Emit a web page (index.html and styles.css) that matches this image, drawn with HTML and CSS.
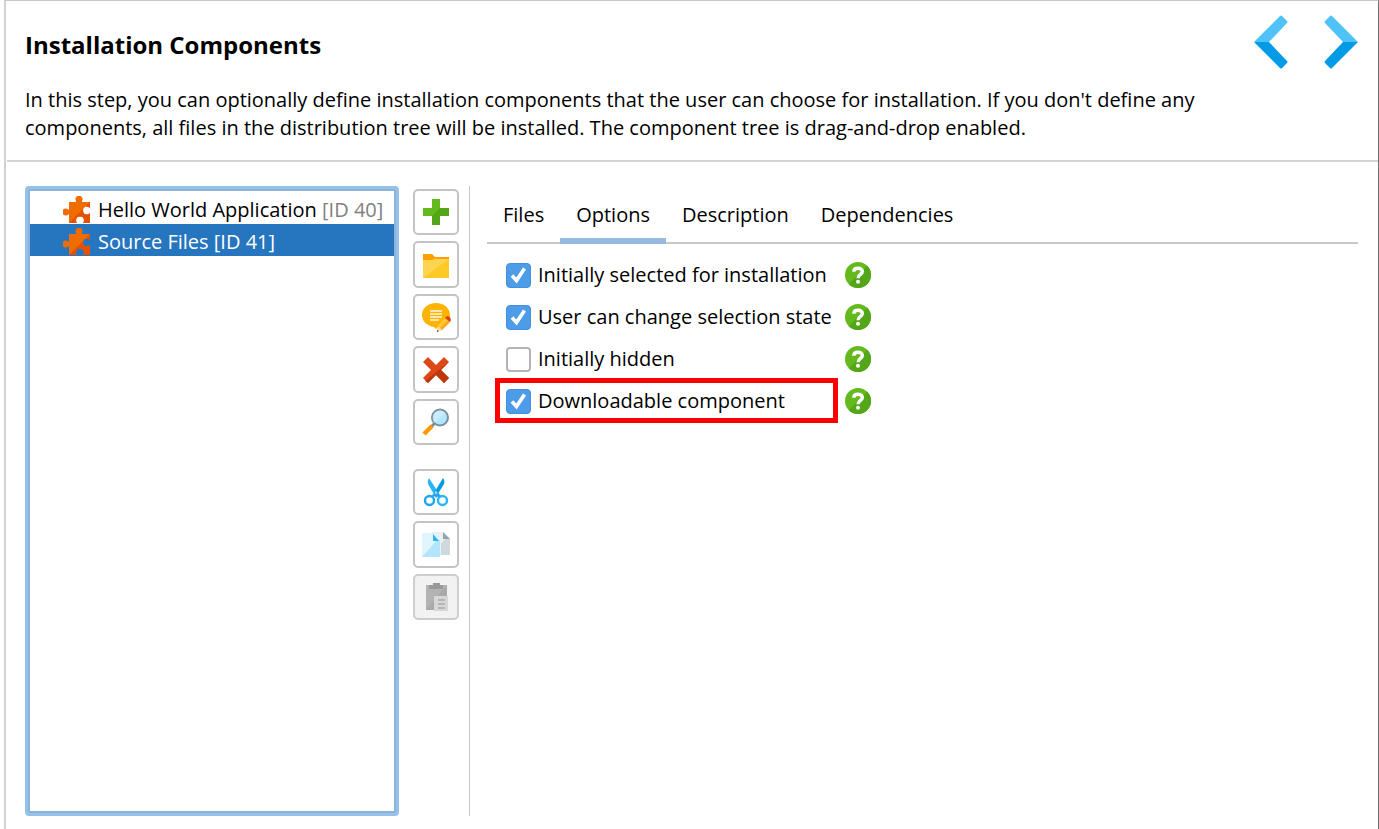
FILE: index.html
```html
<!DOCTYPE html>
<html lang="en">
<head>
<meta charset="utf-8">
<title>Installation Components</title>
<link rel="stylesheet" href="styles.css">
</head>
<body>
<svg class="defs" aria-hidden="true">
  <symbol id="puzzle" viewBox="0 0 27 28">
    <path fill="#ef6c00" d="M6 6h7V5a3.500 3.500 0 1 1 6 0v1h8v6c-1-1-2-1.500-3-1.500a4 4 0 0 0 0 8c1 0 2-.5 3-1.500v10h-7c1-1 1-2 1-2.500a4 4 0 0 0-8 0c0 .5 0 1.500 1 2.500H6v-9c-1 1-2 1.500-3 1.500a3.500 3.500 0 0 1 0-7c1 0 2 .5 3 1.500z"/>
    <path fill="#e65100" d="M27 6v6c-1-1-2-1.500-3-1.500a4 4 0 0 0 0 8c1 0 2-.5 3-1.500v10h-7c1-1 1-2 1-2.500a4 4 0 0 0-8 0c0 .5 0 1.500 1 2.500H6z"/>
  </symbol>
  <symbol id="help" viewBox="0 0 26 26">
    <circle cx="13" cy="13" r="13" fill="#64b91c"/>
    <path fill="#53a618" d="M22.200 3.800A13 13 0 0 1 3.800 22.200z"/>
    <path fill="none" stroke="#fff" stroke-width="3.400" d="M8.800 9.800C8.800 7.500 10.600 6.200 13 6.200s4.400 1.300 4.400 3.400c0 2.800-4.400 2.800-4.400 6.600"/>
    <circle cx="13" cy="19.800" r="2" fill="#fff"/>
  </symbol>
</svg>
<div class="window">
  <header class="header">
    <div class="intro">
      <h1 class="title">Installation Components</h1>
      <p class="text">In this step, you can optionally define installation components that the user can choose for installation. If you don't define any components, all files in the distribution tree will be installed. The component tree is drag-and-drop enabled.</p>
    </div>
    <nav class="steps" aria-label="Steps">
      <button class="step" aria-label="Previous"><svg width="34" height="54" viewBox="0 0 34 54"><path fill="#4fc3f7" d="M0 27 26 1q1-1 2 0l5 5q1 1 0 2L15 27z"/><path fill="#039be5" d="M0 27 26 53q1 1 2 0l5-5q1-1 0-2L15 27z"/></svg></button>
      <button class="step" aria-label="Next"><svg width="34" height="54" viewBox="0 0 34 54"><path fill="#4fc3f7" d="M34 27 8 1Q7 0 6 1L1 6q-1 1 0 2l18 19z"/><path fill="#039be5" d="M34 27 8 53q-1 1-2 0l-5-5q-1-1 0-2l18-19z"/></svg></button>
    </nav>
  </header>
  <main class="main">
    <ul class="tree" role="listbox" aria-label="Components">
      <li class="node" role="option"><svg class="puzzle"><use href="#puzzle"/></svg><span>Hello World Application <span class="id">[ID 40]</span></span></li>
      <li class="node selected" role="option" aria-selected="true"><svg class="puzzle"><use href="#puzzle"/></svg><span>Source Files <span class="id">[ID 41]</span></span></li>
    </ul>
    <div class="toolbar">
      <div class="group">
        <button class="tool" aria-label="Add"><svg viewBox="0 0 30 30"><path fill="#64b91c" d="M11 2h8v9h9v8h-9v9h-8v-9H2v-8h9z"/><path fill="#53a618" d="M28 11v8h-9v9h-8v-9l8-8z"/></svg></button>
        <button class="tool" aria-label="New folder"><svg viewBox="0 0 30 30"><path fill="#ffa000" d="M2 4h9l3 3h14v4H2z"/><path fill="#ffca28" d="M28 9v19H2V10h9l3-1z"/><path fill="#ffd54f" d="M2 10h9l3-1h14L2 28z"/></svg></button>
        <button class="tool" aria-label="Edit comment"><svg viewBox="0 0 30 30"><path fill="#ffb300" d="M15 1c8 0 14 5 14 12 0 6-5 11-12 12l-2 2-2-2C6 24 1 19 1 13 1 6 7 1 15 1z"/><path stroke="#fff8e1" stroke-width="1.500" d="M9 9h12M9 12h12M9 15h12M9 18h9"/><path fill="#ffca28" d="m24 16 5 4-8 8-5 2 1-6z"/><path fill="#f9a825" d="m27 18 2 2-8 8-2-2z"/><path fill="#ffe0b2" d="m17 24 4 4-5 2z"/><path fill="#d84315" d="m26 14 3 1 1 3-1 2-5-4z"/><path fill="#5d4037" d="m16 28 2 1-2 1z"/></svg></button>
        <button class="tool" aria-label="Delete"><svg viewBox="0 0 30 30"><path fill="#dd4817" d="m7 2 8 8 8-8 5 5-8 8 8 8-5 5-8-8-8 8-5-5 8-8-8-8z"/><path fill="#bf360c" d="m28 7-8 8 8 8-5 5-8-8-8 8-3-2z"/></svg></button>
        <button class="tool" aria-label="Find"><svg viewBox="0 0 30 30"><path stroke="#78909c" stroke-width="3" d="m10 20 4-4"/><path stroke="#ff9800" stroke-width="4.500" d="m3 27 8-8"/><circle cx="19" cy="10.500" r="8" fill="#b3e5fc" stroke="#78909c" stroke-width="2"/><path fill="#e1f5fe" d="M13.500 16A7 7 0 0 1 24.500 6z" opacity=".5"/></svg></button>
      </div>
      <div class="group">
        <button class="tool" aria-label="Cut"><svg viewBox="0 0 30 30"><path fill="#29b6f6" d="M8 1 19 18l-4 3L7 7q-1-3 1-6z"/><path fill="#039be5" d="m22 1-9 15 2 4 8-13q1-4-1-6z"/><circle cx="8.500" cy="23.500" r="4.500" fill="none" stroke="#1ba5ec" stroke-width="2.400"/><circle cx="21.500" cy="23.500" r="4.500" fill="none" stroke="#29b6f6" stroke-width="2.400"/><path fill="none" stroke="#29a9ee" stroke-width="2.500" d="m11 20 4-4 4 4"/><circle cx="15" cy="15.500" r="1.200" fill="#cfd8dc"/></svg></button>
        <button class="tool" aria-label="Copy"><svg viewBox="0 0 30 30"><path fill="#eceff1" d="M11 2h11l7 7v16H11z"/><path fill="#cfd8dc" d="M29 9v16h-9V14l4-5z"/><path fill="#90a4ae" d="M22 2v7h7z"/><path fill="#e1f5fe" d="M1 3h11l7 7v17H1z"/><path fill="#b3e5fc" d="M19 10v17H1L16 10z"/><path fill="#29b6f6" d="m12 4 6 7h-6z"/></svg></button>
        <button class="tool" aria-label="Paste" disabled><svg viewBox="0 0 30 30"><path fill="#b3b3b3" d="M5 3h21v25H5z"/><path fill="#a0a0a0" d="M26 3v25H5z" opacity=".5"/><path fill="#999" d="M12 1h7v2h3v4H8V3h4z"/><path fill="#d7d7d7" d="M13 14h14v15H13z"/><path stroke="#aaa" stroke-width="1.500" d="M17 18h7M17 22h7M17 26h7"/></svg></button>
      </div>
    </div>
    <section class="panel">
      <div class="tabs" role="tablist">
        <button class="tab" role="tab">Files</button>
        <button class="tab active" role="tab" aria-selected="true">Options</button>
        <button class="tab" role="tab">Description</button>
        <button class="tab" role="tab">Dependencies</button>
      </div>
      <div class="options">
        <label class="option"><input class="check" type="checkbox" checked>Initially selected for installation</label>
        <button class="help" aria-label="Help"><svg><use href="#help"/></svg></button>
        <label class="option"><input class="check" type="checkbox" checked>User can change selection state</label>
        <button class="help" aria-label="Help"><svg><use href="#help"/></svg></button>
        <label class="option"><input class="check" type="checkbox">Initially hidden</label>
        <button class="help" aria-label="Help"><svg><use href="#help"/></svg></button>
        <label class="option marked"><input class="check" type="checkbox" checked>Downloadable component</label>
        <button class="help" aria-label="Help"><svg><use href="#help"/></svg></button>
      </div>
    </section>
  </main>
</div>
</body>
</html>
```
FILE: styles.css
```css
* { box-sizing: border-box; }
body {
  margin: 0;
  background: #fff;
  color: #000;
  font: 20px/28px "Open Sans", "Noto Sans", sans-serif;
}
button {
  margin: 0;
  padding: 0;
  border: 0;
  background: none;
  color: inherit;
  font: inherit;
}
svg { display: block; }
.defs { position: absolute; width: 0; height: 0; }
.window {
  display: flex;
  flex-direction: column;
  min-height: 100vh;
  margin-left: 4px;
  border-top: 1px solid #c8c8c8;
  border-left: 2px solid #d2d2d2;
  border-right: 1px solid #707070;
}
.header {
  display: flex;
  justify-content: space-between;
  margin-left: 1px;
  padding: 30px 20px 18px 18px;
  border-bottom: 2px solid #d2d2d2;
}
.title { margin: 0 0 27px; font-size: 24px; line-height: 28px; font-weight: 700; }
.intro { flex: 0 1 1190px; }
.text { margin: 0; }
.steps { display: flex; gap: 36px; align-items: flex-start; margin-top: -16px; }
.main {
  flex: 1;
  display: flex;
  padding: 24px 20px 13px 19px;
}
.tree {
  flex: 0 0 374px;
  margin: 0;
  padding: 3px 0 0;
  list-style: none;
  border: 3px solid #96c1ea;
  border-radius: 4px;
  box-shadow: inset 0 0 0 2px #8cb2d9;
}
.node {
  display: flex;
  align-items: center;
  gap: 8px;
  height: 32px;
  margin: 0 2px;
  padding: 3px 0 0 33px;
  white-space: nowrap;
}
.node.selected { background: #2675bf; color: #fff; }
.id { color: #808080; }
.selected .id { color: inherit; }
.puzzle { flex: none; width: 27px; height: 28px; }
.toolbar {
  display: flex;
  flex-direction: column;
  gap: 24px;
  padding: 3px 10px 0 14px;
  border-right: 1px solid #c8c8c8;
}
.group { display: flex; flex-direction: column; gap: 6px; }
.tool {
  display: grid;
  place-items: center;
  width: 46px;
  height: 46px;
  border: 2px solid #c4c4c4;
  border-radius: 5px;
}
.tool:nth-child(even) { height: 47px; }
.tool:disabled { background: #f2f2f2; border-color: #cdcdcd; }
.tool svg { width: 30px; height: 30px; }
.panel { flex: 1; margin-left: 17px; }
.tabs { display: flex; height: 58px; border-bottom: 2px solid #c8c8c8; }
.tab { height: 58px; padding: 6px 16px 0; border-bottom: 6px solid transparent; }
.tab.active { border-color: #96b9e0; }
.options {
  display: grid;
  grid-template-columns: minmax(332px, max-content) 26px;
  grid-auto-rows: 42px;
  column-gap: 7px;
  align-items: center;
  padding: 10px 0 0 19px;
}
.option { display: flex; align-items: center; gap: 7px; height: 42px; white-space: nowrap; }
.marked { position: relative; }
.marked::after {
  content: "";
  position: absolute;
  inset: -2px 0 -1px -11px;
  border: 5px solid #f00;
}
.check {
  appearance: none;
  flex: none;
  width: 25px;
  height: 25px;
  margin: 0;
  border: 2px solid #b4b4b4;
  border-radius: 4px;
  background: #fff;
}
.check:checked {
  border: 1px solid #4590dc;
  background: #4d9ce8 url("data:image/svg+xml,%3Csvg xmlns='http://www.w3.org/2000/svg' viewBox='0 0 23 23'%3E%3Cpath d='M5 11.500l4.500 5L17.500 4.500' fill='none' stroke='white' stroke-width='3.600'/%3E%3C/svg%3E");
}
.help svg { width: 26px; height: 26px; }
```
